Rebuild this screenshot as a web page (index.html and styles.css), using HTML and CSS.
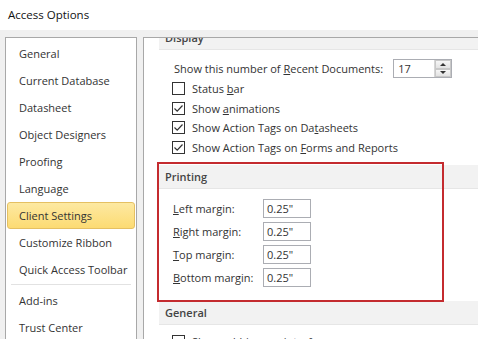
FILE: index.html
```html
<!DOCTYPE html>
<html lang="en">
<head>
    <meta charset="UTF-8">
    <title>Access Options</title>
    <link rel="stylesheet" href="styles.css">
</head>
<body>
    <div class="title-bar">Access Options</div>

    <div class="main-container">
        <div class="nav-list">
            <div class="nav-item">General</div>
            <div class="nav-item">Current Database</div>
            <div class="nav-item">Datasheet</div>
            <div class="nav-item">Object Designers</div>
            <div class="nav-item">Proofing</div>
            <div class="nav-item">Language</div>
            <div class="nav-item selected">Client Settings</div>
            <div class="nav-item">Customize Ribbon</div>
            <div class="nav-item">Quick Access Toolbar</div>
            <div class="nav-divider"></div>
            <div class="nav-item">Add-ins</div>
            <div class="nav-item">Trust Center</div>
        </div>

        <div class="options-panel">
            <div class="options-scroll">
                <div class="section-header display-header">Display</div>
                <div class="section-body display-body">
                    <div class="recent-row">
                        <span>Show this number of <u>R</u>ecent Documents:</span>
                        <div class="spinner">
                            <span class="spinner-value">17</span>
                            <div class="spinner-buttons">
                                <div class="spin-btn"><span class="arrow-up"></span></div>
                                <div class="spin-btn"><span class="arrow-down"></span></div>
                            </div>
                        </div>
                    </div>
                    <div class="check-row">
                        <span class="checkbox"></span>
                        <span>Status <u>b</u>ar</span>
                    </div>
                    <div class="check-row">
                        <span class="checkbox checked"><svg width="11" height="11" viewBox="0 0 11 11"><path d="M1.5 5.5 L4.2 8.2 L9.5 2.5" fill="none" stroke="#333" stroke-width="1.2"/></svg></span>
                        <span>Show <u>a</u>nimations</span>
                    </div>
                    <div class="check-row">
                        <span class="checkbox checked"><svg width="11" height="11" viewBox="0 0 11 11"><path d="M1.5 5.5 L4.2 8.2 L9.5 2.5" fill="none" stroke="#333" stroke-width="1.2"/></svg></span>
                        <span>Show Action Tags on Da<u>t</u>asheets</span>
                    </div>
                    <div class="check-row">
                        <span class="checkbox checked"><svg width="11" height="11" viewBox="0 0 11 11"><path d="M1.5 5.5 L4.2 8.2 L9.5 2.5" fill="none" stroke="#333" stroke-width="1.2"/></svg></span>
                        <span>Show Action Tags on <u>F</u>orms and Reports</span>
                    </div>
                </div>

                <div class="printing-section">
                    <div class="section-header">Printing</div>
                    <div class="section-body margin-grid">
                        <div class="margin-row">
                            <span class="margin-label"><u>L</u>eft margin:</span>
                            <span class="margin-input">0.25"</span>
                        </div>
                        <div class="margin-row">
                            <span class="margin-label"><u>R</u>ight margin:</span>
                            <span class="margin-input">0.25"</span>
                        </div>
                        <div class="margin-row">
                            <span class="margin-label"><u>T</u>op margin:</span>
                            <span class="margin-input">0.25"</span>
                        </div>
                        <div class="margin-row">
                            <span class="margin-label"><u>B</u>ottom margin:</span>
                            <span class="margin-input">0.25"</span>
                        </div>
                    </div>
                    <div class="highlight-box"></div>
                </div>

                <div class="section-header">General</div>
                <div class="section-body general-body">
                    <div class="check-row">
                        <span class="checkbox"></span>
                        <span>Show add-in user interface errors</span>
                    </div>
                </div>
            </div>
        </div>
    </div>
</body>
</html>
```

FILE: styles.css
```css
body, html {
    margin: 0;
    padding: 0;
    height: 100%;
    overflow: hidden;
    background-color: #f0f0f0;
    color: #333;
    font-family: "Open Sans", "Noto Sans", sans-serif;
    font-size: 11px;
}

.title-bar {
    height: 30px;
    line-height: 30px;
    padding-left: 8px;
    background-color: #fff;
    color: #111;
    font-size: 11.5px;
}

.main-container {
    display: flex;
    gap: 6px;
    padding: 7px 0 0 5px;
    height: calc(100% - 30px);
    box-sizing: border-box;
}

.nav-list {
    width: 132px;
    flex-shrink: 0;
    background-color: #fff;
    border: 1px solid #a8a8a8;
    border-bottom: none;
    box-sizing: border-box;
    padding: 2px 1px 0 1px;
}

.nav-item {
    height: 27px;
    line-height: 27px;
    padding-left: 12px;
    box-sizing: border-box;
}

.nav-item.selected {
    background: linear-gradient(#fde9a2, #fcdb73);
    border: 1px solid #e5c062;
    border-radius: 3px;
    line-height: 25px;
    height: 27px;
    padding-left: 11px;
}

.nav-divider {
    height: 1px;
    background-color: #e2e2e2;
    margin: 1px 4px 2px 4px;
}

.options-panel {
    flex: 1;
    background-color: #fff;
    border-top: 1px solid #a8a8a8;
    border-left: 1px solid #a8a8a8;
    overflow: hidden;
}

.options-scroll {
    margin-top: -12px;
    padding-left: 15px;
}

.section-header {
    height: 24px;
    line-height: 23px;
    padding-left: 6px;
    background-color: #f2f2f2;
    border-bottom: 1px solid #e6e6e6;
    box-sizing: border-box;
    font-weight: 600;
    color: #444;
}

.section-body {
    padding-left: 13px;
}

.display-body {
    padding-top: 8px;
    padding-bottom: 8px;
}

.general-body {
    padding-top: 7px;
}

.recent-row {
    display: flex;
    align-items: center;
    height: 21px;
    padding-left: 2px;
    gap: 10px;
}

.spinner {
    display: flex;
    width: 59px;
    height: 19px;
    border: 1px solid #abadb3;
    box-sizing: border-box;
}

.spinner-value {
    flex: 1;
    line-height: 17px;
    padding-left: 4px;
}

.spinner-buttons {
    width: 16px;
    display: flex;
    flex-direction: column;
    border-left: 1px solid #d6d6d6;
}

.spin-btn {
    flex: 1;
    display: flex;
    align-items: center;
    justify-content: center;
    background: linear-gradient(#f6f6f6, #e2e2e2);
    border: 1px solid #c8c8c8;
}

.arrow-up {
    border-left: 3px solid transparent;
    border-right: 3px solid transparent;
    border-bottom: 3px solid #333;
}

.arrow-down {
    border-left: 3px solid transparent;
    border-right: 3px solid transparent;
    border-top: 3px solid #333;
}

.check-row {
    display: flex;
    align-items: center;
    height: 19.5px;
    gap: 7px;
}

.checkbox {
    width: 13px;
    height: 13px;
    border: 1px solid #333;
    box-sizing: border-box;
    display: flex;
    align-items: center;
    justify-content: center;
    background-color: #fff;
}

.printing-section {
    position: relative;
}

.margin-grid {
    padding-top: 10px;
    padding-bottom: 14px;
    display: flex;
    flex-direction: column;
    gap: 4px;
}

.margin-row {
    display: flex;
    align-items: center;
    height: 19px;
    padding-left: 1px;
}

.margin-label {
    width: 90px;
}

.margin-input {
    width: 48px;
    height: 19px;
    line-height: 17px;
    border: 1px solid #abadb3;
    box-sizing: border-box;
    padding-left: 3px;
}

/* red annotation frame drawn over the screenshot */
.highlight-box {
    position: absolute;
    top: -3px;
    left: -2px;
    width: 287px;
    height: 140px;
    border: 2px solid #c42b2f;
    box-sizing: border-box;
    pointer-events: none;
}
```
